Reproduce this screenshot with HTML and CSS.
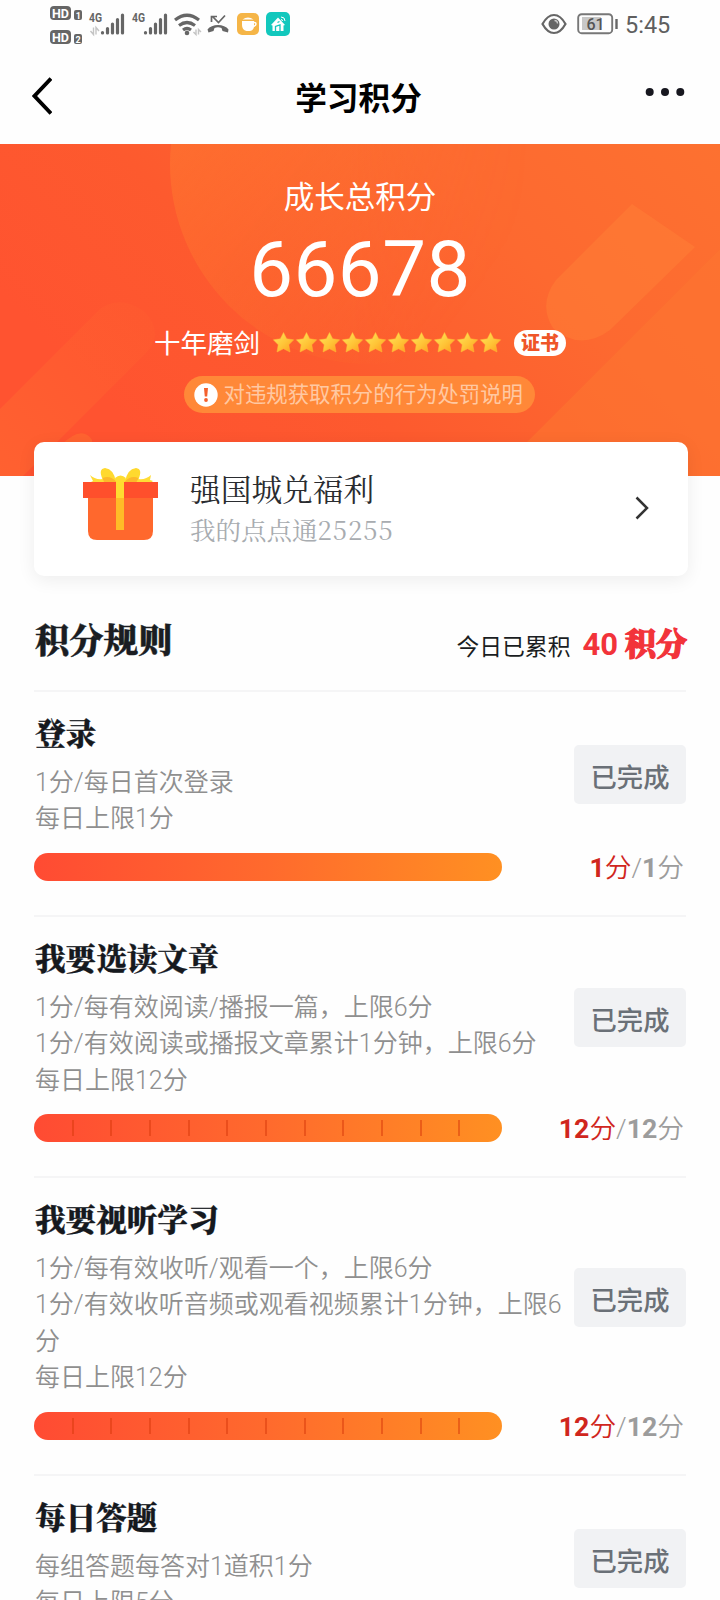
FILE: index.html
```html
<!DOCTYPE html>
<html lang="zh-CN">
<head>
<meta charset="utf-8">
<title>学习积分</title>
<link rel="stylesheet" href="styles.css">
</head>
<body>
<div class="screen">
  <header class="status">
    <svg class="status-left" width="250" height="46" viewBox="0 0 250 46">
      <g fill="#666">
        <rect x="0" y="6" width="21" height="14" rx="4"/><rect x="24" y="10" width="8" height="10" rx="2"/>
        <rect x="0" y="30" width="21" height="14" rx="4"/><rect x="24" y="34" width="8" height="10" rx="2"/>
      </g>
      <g fill="#fff" font-family="Roboto, sans-serif" font-weight="700">
        <text x="2" y="17.600" font-size="13" textLength="17" lengthAdjust="spacingAndGlyphs">HD</text><text x="25.800" y="18.500" font-size="9">1</text>
        <text x="2" y="41.600" font-size="13" textLength="17" lengthAdjust="spacingAndGlyphs">HD</text><text x="25.600" y="42.500" font-size="9">2</text>
      </g>
      <g fill="#666" font-family="Roboto, sans-serif" font-weight="700" font-size="13">
        <text x="39" y="22.300" textLength="13" lengthAdjust="spacingAndGlyphs">4G</text>
        <text x="82" y="22.300" textLength="13" lengthAdjust="spacingAndGlyphs">4G</text>
      </g>
      <g stroke="#666" stroke-width="3.200" stroke-linecap="round">
        <path d="M52.500 32.500v.5M57.500 28.500v4.500M62.500 24v9M67.500 19.500v13.500M72.500 15v18"/>
        <path d="M95.500 32.500v.5M100.500 28.500v4.500M105.500 24v9M110.500 19.500v13.500M115.500 15v18"/>
      </g>
      <g fill="none" stroke="#c4c4c4" stroke-width="1.400"><path d="M43.500 27.500v7l-3-3.500M46 34.500v-7l3 3.500M146 29.500v5l-2.500-2.500M148.500 34.500v-5l2.500 2.500"/></g>
      <g fill="none" stroke="#666" stroke-width="3.200">
        <path d="M125 20q12-9.500 24 0M129 25.500q8-6 16 0M133 30q4-3 8 0"/>
      </g>
      <circle cx="137" cy="33" r="2.300" fill="#666"/>
      <path d="M157.500 29.500c4-6 17-6 21 0l-.5 3-5.500-1.500-1-3q-3.500-1.500-7 0l-1 3-5 1.500z" fill="#666"/>
      <path d="M175 15.500l-6.500 7-6-6M161.500 22v-5.500h5.500" fill="none" stroke="#666" stroke-width="1.700"/>
      <rect x="187" y="13" width="22" height="22" rx="5" fill="#f5b547"/>
      <path d="M192 21h12v6q-1 4-4.500 4h-3q-4.500-1-4.500-6z" fill="#fff"/>
      <path d="M203.500 22.500h1q1.500 0 1.500 1.500t-2.500 2.500" fill="none" stroke="#fff" stroke-width="1.500"/>
      <path d="M192.500 19.500q5.500-4 11 0z" fill="#fff"/>
      <rect x="216" y="12" width="24" height="24" rx="5" fill="#12c8bd"/>
      <path d="M221 25l7-7.500 7 7.500-1.500.5v5.500h-11V25.500z" fill="#fff"/>
      <path d="M225.500 31v-4.500l4.500-1.500v6M227.500 22.500l2-1" stroke="#12c8bd" stroke-width="1.300" fill="none"/>
      <path d="M231 17q4 0 4 4M231 19.500q1.500 0 1.500 1.500" stroke="#fff" stroke-width="1" fill="none"/>
    </svg>
    <div class="status-right">
      <svg width="26" height="22" viewBox="0 0 26 22"><path d="M1.500 11Q6.500 2 13 2t11.500 9Q19.500 20 13 20T1.500 11z" fill="none" stroke="#666" stroke-width="2.200"/><circle cx="13" cy="11" r="5.500" fill="#666"/><path d="M13.500 7.500q3 0 3 3" stroke="#ccc" stroke-width="1.300" fill="none"/></svg>
      <svg class="battery" width="42" height="22" viewBox="0 0 42 22"><rect x="5" y="4" width="19" height="13" fill="#c8c8c8"/><rect x="1.200" y="1.200" width="34" height="19" rx="3.500" fill="none" stroke="#777" stroke-width="1.900"/><path d="M39.500 6v10" stroke="#666" stroke-width="2.400"/><text x="9.500" y="16.500" font-family="Roboto, sans-serif" font-size="16" font-weight="500" fill="#555">61</text></svg>
      <span class="clock">5:45</span>
    </div>
  </header>
  <nav class="nav">
    <svg width="20" height="38" viewBox="0 0 20 38"><path d="M19 1.500L2.500 19 19 36.500" fill="none" stroke="#000" stroke-width="3.900"/></svg>
    <h1 class="nav-title">学习积分</h1>
    <svg class="more" width="40" height="10" viewBox="0 0 40 10"><g fill="#17171f"><circle cx="4.700" cy="5" r="4"/><circle cx="20" cy="5" r="4"/><circle cx="35.300" cy="5" r="4"/></g></svg>
  </nav>

  <section class="hero">
    <svg class="hero-bg" width="720" height="332" viewBox="0 0 720 332">
      <defs>
        <linearGradient id="base" x1="0" y1=".45" x2="1" y2="0"><stop offset="0" stop-color="#ff5330"/><stop offset=".3" stop-color="#fd5a2e"/><stop offset=".65" stop-color="#fd6930"/><stop offset="1" stop-color="#fd7130"/></linearGradient>
        <linearGradient id="disc" x1=".1" y1=".35" x2=".75" y2=".85"><stop offset="0" stop-color="#ff7c30" stop-opacity=".5"/><stop offset="1" stop-color="#ff7c30" stop-opacity="0"/></linearGradient>
        <linearGradient id="fade"><stop offset="0" stop-color="#fff"/><stop offset=".45" stop-color="#fff"/><stop offset=".9" stop-color="#000"/></linearGradient>
        <mask id="left"><rect x="170" width="400" height="332" fill="url(#fade)"/></mask>
        <linearGradient id="streak" x1="1" y1="0" x2="0" y2="1"><stop offset="0" stop-color="#ff6a30" stop-opacity=".1"/><stop offset="1" stop-color="#ff6a30" stop-opacity=".6"/></linearGradient>
      </defs>
      <rect width="720" height="332" fill="url(#base)"/>
      <circle cx="370" cy="20" r="200" fill="url(#disc)" mask="url(#left)"/>
      <path d="M0 265L100 165Q120 150 145 168Q165 190 145 210L23 332H0z" fill="url(#streak)"/>
      <path d="M60 302Q82 280 92 296V310H55z" fill="#ff7430" opacity=".5"/>
      <path d="M525 300L720 105V332H500z" fill="#fd7530" opacity=".6"/>
      <path d="M632 60L556 136Q538 160 553 184Q580 208 610 186L695 103z" fill="#ff8035" opacity=".5"/>
    </svg>
    <p class="hero-label">成长总积分</p>
    <p class="hero-score">66678</p>
    <div class="rank">
      <span class="rank-name">十年磨剑</span>
      <svg class="stars" width="230" height="24" viewBox="0 0 230 24">
        <defs><linearGradient id="gold" x1="0" y1="0" x2="1" y2="1"><stop offset="0" stop-color="#ffe65a"/><stop offset=".55" stop-color="#ffc437"/><stop offset="1" stop-color="#ff9c1c"/></linearGradient>
        <path id="star" d="M11.500 1.500l3.200 6.300 7 1-4.900 5 1.200 7.200-6.500-3.300-6.500 3.300 1.200-7.200-4.900-5 7-1z" fill="url(#gold)" stroke="#ffb838" stroke-width=".5" stroke-linejoin="round"/></defs>
        <use href="#star" x="0"/><use href="#star" x="23"/><use href="#star" x="46"/><use href="#star" x="69"/><use href="#star" x="92"/><use href="#star" x="115"/><use href="#star" x="138"/><use href="#star" x="161"/><use href="#star" x="184"/><use href="#star" x="207"/>
      </svg>
      <span class="cert">证书</span>
    </div>
    <div class="notice">
      <svg width="24" height="24" viewBox="0 0 24 24"><circle cx="12" cy="12" r="11.700" fill="#fff"/><path d="M10 5h4l-.8 8.500h-2.400z" fill="#f4602d"/><circle cx="12" cy="17" r="1.900" fill="#f4602d"/></svg>
      <span>对违规获取积分的行为处罚说明</span>
    </div>
  </section>

  <section class="card">
    <svg class="gift" width="76" height="74" viewBox="0 0 76 74">
      <path d="M7 8q5 5 13 4h35q8 1 13-4l-1 5 3 1-5 4H10L8 15l2-1z" fill="#ffdc35"/>
      <path d="M33 15Q31 2 22 1q-7 1-2.500 11l12.500 4zM42 15Q44 2 53 1q7 1 2.500 11l-12.500 4z" fill="#ffd92e"/>
      <path d="M19.500 11q8-3 14 4H21zM55.500 11q-8-3-14 4h12z" fill="#fcb82a"/>
      <path d="M5 30h65v34q0 9-9 9H14q-9 0-9-9z" fill="#ff682d"/>
      <rect x="0" y="15" width="75" height="16" fill="#ff4f2c"/>
      <path d="M33 31h8v32h-8z" fill="#ffbc27"/><path d="M32 11q5.500-5 11 0l-2 4v16h-8V15z" fill="#ffdc30"/>
    </svg>
    <div class="card-text">
      <h2 class="card-title">强国城兑福利</h2>
      <p class="card-sub">我的点点通<span class="card-num">25255</span></p>
    </div>
    <svg class="chev" width="14" height="24" viewBox="0 0 14 24"><path d="M1.500 1.500L12 12 1.500 22.500" fill="none" stroke="#333" stroke-width="2.500"/></svg>
  </section>

  <main class="rules">
    <div class="rules-head">
      <h2 class="rules-title">积分规则</h2>
      <p class="today">今日已累积<b class="today-num">40</b><b class="today-unit">积分</b></p>
    </div>

    <article class="task">
      <div class="task-top">
        <div class="task-text"><h3>登录</h3><p>1分/每日首次登录</p><p>每日上限1分</p></div>
        <button class="done">已完成</button>
      </div>
      <div class="progress"><div class="bar"></div><p class="score"><span class="got"><b>1</b>分</span>/<b>1</b>分</p></div>
    </article>

    <article class="task">
      <div class="task-top">
        <div class="task-text"><h3>我要选读文章</h3><p>1分/每有效阅读/播报一篇，上限6分</p><p>1分/有效阅读或播报文章累计1分钟，上限6分</p><p>每日上限12分</p></div>
        <button class="done">已完成</button>
      </div>
      <div class="progress"><div class="bar"><i></i><i></i><i></i><i></i><i></i><i></i><i></i><i></i><i></i><i></i><i></i><i></i></div><p class="score"><span class="got"><b>12</b>分</span>/<b>12</b>分</p></div>
    </article>

    <article class="task">
      <div class="task-top">
        <div class="task-text"><h3>我要视听学习</h3><p>1分/每有效收听/观看一个，上限6分</p><p>1分/有效收听音频或观看视频累计1分钟，上限6分</p><p>每日上限12分</p></div>
        <button class="done">已完成</button>
      </div>
      <div class="progress"><div class="bar"><i></i><i></i><i></i><i></i><i></i><i></i><i></i><i></i><i></i><i></i><i></i><i></i></div><p class="score"><span class="got"><b>12</b>分</span>/<b>12</b>分</p></div>
    </article>

    <article class="task">
      <div class="task-top">
        <div class="task-text"><h3>每日答题</h3><p>每组答题每答对1道积1分</p><p>每日上限5分</p></div>
        <button class="done">已完成</button>
      </div>
    </article>
  </main>
</div>
</body>
</html>
```
FILE: styles.css
```css
* { box-sizing: border-box; margin: 0; padding: 0; }
body { background: #fefefe; font-family: Roboto, "Noto Sans CJK SC", sans-serif; color: #1a1d22; }
svg { display: block; flex: none; }
.screen { width: 720px; height: 1600px; overflow: hidden; }

.status { height: 48px; display: flex; justify-content: space-between; padding: 0 50px; }
.status-right { display: flex; align-items: center; height: 48px; }
.battery { margin-left: 10px; }
.clock { margin-left: 6px; width: 45px; font-size: 23.5px; line-height: 28px; color: #5f5f5f; padding-top: 2px; }

.nav { height: 96px; display: flex; justify-content: space-between; align-items: center; padding: 0 35px 0 32px; }
.nav-title { font-size: 31.700px; line-height: 40px; font-weight: 700; color: #000; padding-left: 20px; margin-top: 8px; }
.more { margin-top: -8px; }

.hero { position: relative; height: 332px; display: flex; flex-direction: column; align-items: center; color: #fff; }
.hero-bg { position: absolute; left: 0; top: 0; z-index: -1; }
.hero-label { margin-top: 32px; font-size: 30.500px; line-height: 44px; }
.hero-score { margin-top: 10px; font-size: 78px; line-height: 80px; letter-spacing: .5px; }
.rank { display: flex; align-items: center; height: 36px; margin-top: 15px; }
.rank-name { font-size: 26.500px; line-height: 36px; padding-top: 2px; }
.stars { margin: 0 12px; }
.cert { width: 52px; height: 26px; border-radius: 13px; background: #fff; color: #ef5528; font-size: 19px; font-weight: 900; line-height: 27px; text-align: center; }
.notice { display: flex; align-items: center; gap: 6px; width: 351px; height: 37px; margin: 15px 2px 0 0; padding-left: 10px; border-radius: 19px; background: #ff8838; color: #ffc8a2; font-size: 21.400px; line-height: 34px; white-space: nowrap; }

.card { position: relative; display: flex; align-items: center; width: 654px; height: 134px; margin: -34px 0 0 34px; padding: 0 39px 0 49px; border-radius: 10px; background: #fff; box-shadow: 0 4px 18px rgba(0, 0, 0, .07); }
.gift { margin-top: -10px; }
.card-text { flex: 1; margin: -4px 0 0 31px; font-family: "Noto Serif CJK SC", "Noto Sans CJK SC", serif; }
.card-title { font-size: 30.700px; font-weight: 400; line-height: 44px; color: #2a2c30; }
.card-sub { font-size: 25.500px; line-height: 38px; color: #a8acb0; font-weight: 400; }
.card-num { letter-spacing: 1px; }
.chev { margin-top: -2px; }

.rules { padding: 0 34px; }
.rules-head { display: flex; justify-content: space-between; align-items: center; height: 114px; padding-top: 12px; }
.rules-title { font: 900 34.300px/46px "Noto Serif CJK SC", "Noto Sans CJK SC", serif; padding-left: 1px; -webkit-text-stroke: .4px #1a1d22; }
.today { font-size: 22.800px; line-height: 46px; padding-top: 15px; margin-right: -1px; }
.today b { color: #f2333a; }
.today-num { font-size: 31px; margin: 0 7px 0 12px; }
.today-unit { font: 900 31px/40px "Noto Serif CJK SC", "Noto Sans CJK SC", serif; -webkit-text-stroke: 1.300px #f2333a; }

.task { border-top: 2px solid #f5f5f6; padding-bottom: 34px; }
.task-top { display: flex; align-items: center; padding-top: 20px; }
.task-text { width: 540px; color: #8f8f8f; font-size: 25px; font-weight: 350; padding-left: 1px; }
.task-text h3 { font: 900 30.600px/40px "Noto Serif CJK SC", "Noto Sans CJK SC", serif; color: #16191e; margin-bottom: 13px; -webkit-text-stroke: .3px #16191e; }
.task-text p { line-height: 36.400px; width: 528px; }
.done { width: 112px; height: 59px; flex: none; border: 0; border-radius: 5px; background: #f1f2f4; color: #6a7077; font: 500 26.300px/59px Roboto, "Noto Sans CJK SC", sans-serif; padding-top: 4px; }
.progress { display: flex; justify-content: space-between; align-items: center; height: 28px; margin-top: 15px; padding-right: 2px; }
.bar { display: flex; align-items: center; width: 468px; height: 28px; padding: 0 5px 0 1px; border-radius: 14px; background: linear-gradient(90deg, #ff4b33, #ff6a2d 50%, #ff9022); }
.bar i { flex: 1; height: 16px; border-right: 2px solid rgba(215, 55, 10, .5); }
.bar i:last-child { border: 0; }
.score { font-size: 26.700px; line-height: 28px; color: #9c9c9c; font-weight: 350; padding-top: 2px; }
.score b { font-weight: 700; }
.got { color: #d0261d; }
```
